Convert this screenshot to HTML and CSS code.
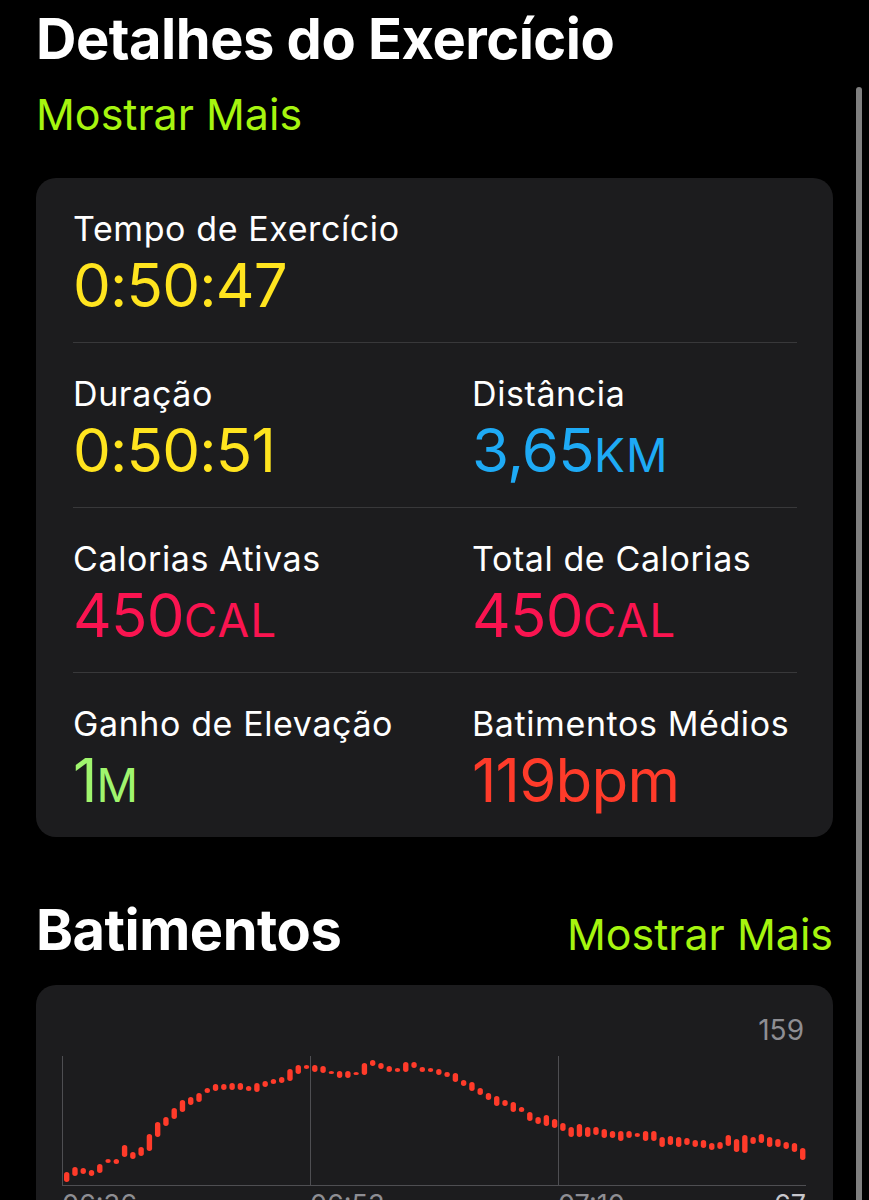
FILE: index.html
```html
<!DOCTYPE html>
<html lang="pt">
<head>
    <meta charset="UTF-8">
    <meta name="viewport" content="width=device-width, initial-scale=1.0">
    <title>Detalhes do Exercício</title>
    <link rel="stylesheet" href="styles.css">
</head>
<body>
    <div class="scrollbar"></div>

    <main class="page">
        <h1 class="title">Detalhes do Exercício</h1>
        <a class="more more-block" href="#">Mostrar Mais</a>

        <section class="card stats">
            <div class="stats-row">
                <div class="stat">
                    <div class="stat-label">Tempo de Exercício</div>
                    <div class="stat-value yellow">0:50:47</div>
                </div>
            </div>
            <div class="stats-row">
                <div class="stat">
                    <div class="stat-label">Duração</div>
                    <div class="stat-value yellow">0:50:51</div>
                </div>
                <div class="stat">
                    <div class="stat-label">Distância</div>
                    <div class="stat-value blue">3,65<span class="unit">KM</span></div>
                </div>
            </div>
            <div class="stats-row">
                <div class="stat">
                    <div class="stat-label">Calorias Ativas</div>
                    <div class="stat-value pink">450<span class="unit">CAL</span></div>
                </div>
                <div class="stat">
                    <div class="stat-label">Total de Calorias</div>
                    <div class="stat-value pink">450<span class="unit">CAL</span></div>
                </div>
            </div>
            <div class="stats-row">
                <div class="stat">
                    <div class="stat-label">Ganho de Elevação</div>
                    <div class="stat-value green">1<span class="unit">M</span></div>
                </div>
                <div class="stat">
                    <div class="stat-label">Batimentos Médios</div>
                    <div class="stat-value red">119bpm</div>
                </div>
            </div>
        </section>

        <div class="section-head">
            <h2 class="title">Batimentos</h2>
            <a class="more" href="#">Mostrar Mais</a>
        </div>

        <section class="card chart-card">
            <div class="chart-max">159</div>
            <svg class="chart" id="hrChart" width="744" height="134" viewBox="0 0 744 134">
                <g class="grid">
                    <rect x="0" y="4" width="1" height="130"></rect>
                    <rect x="248" y="4" width="1" height="130"></rect>
                    <rect x="496" y="4" width="1" height="130"></rect>
                    <rect x="0" y="133" width="744" height="1"></rect>
                </g>
                <g id="hrBars" class="bars"></g>
            </svg>
            <div class="chart-axis">
                <span>06:36</span>
                <span>06:53</span>
                <span class="axis-last"><span>07:10</span><span class="axis-min">67</span></span>
            </div>
        </section>
    </main>

    <script>
        document.addEventListener('DOMContentLoaded', function() {
            // topo e base de cada barra (y dentro do gráfico)
            const bars = [
                [120,130],[115,124],[116,122],[118,124],[112,121],[107,111],[107,112],[93,105],[100,107],[95,104],
                [82,99],[70,85],[65,74],[56,67],[48,60],[45,53],[41,50],[36,41],[32,39],[32,38],
                [31,38],[31,38],[34,39],[31,40],[29,35],[27,32],[25,31],[17,29],[13,22],[13,17],
                [13,20],[14,21],[19,22],[19,26],[19,26],[20,23],[11,23],[8,14],[11,17],[14,20],
                [16,20],[10,20],[10,16],[15,20],[16,20],[17,23],[20,25],[21,30],[28,34],[30,39],
                [36,43],[41,48],[44,54],[48,54],[50,60],[55,60],[60,69],[65,72],[63,74],[67,76],
                [71,79],[75,85],[72,85],[75,85],[75,83],[77,86],[79,86],[79,89],[79,86],[81,85],
                [79,89],[79,89],[85,95],[84,93],[85,95],[86,93],[88,95],[88,96],[91,98],[90,97],
                [83,94],[87,100],[83,101],[85,92],[82,91],[85,95],[87,95],[90,97],[91,100],[96,108]
            ];

            const group = document.getElementById('hrBars');
            const ns = 'http://www.w3.org/2000/svg';
            const step = 8.27;

            bars.forEach(function(bar, i) {
                const rect = document.createElementNS(ns, 'rect');
                rect.setAttribute('x', (2 + i * step).toFixed(2));
                rect.setAttribute('y', bar[0]);
                rect.setAttribute('width', 5.4);
                rect.setAttribute('height', bar[1] - bar[0]);
                rect.setAttribute('rx', 2.7);
                group.appendChild(rect);
            });
        });
    </script>
</body>
</html>
```

FILE: styles.css
```css
:root {
    --bg: #000;
    --card: #1c1c1e;
    --divider: #38383a;
    --muted: #8e8e93;
    --lime: #a6f50f;
    --yellow: #ffe41f;
    --blue: #1eaaf5;
    --pink: #fa1450;
    --green: #a0f56e;
    --red: #ff3b2a;
}

* {
    box-sizing: border-box;
    margin: 0;
    padding: 0;
}

body {
    background: var(--bg);
    color: #fff;
    font-family: Inter, 'Noto Sans', sans-serif;
    position: relative;
}

.scrollbar {
    position: absolute;
    top: 87px;
    left: 856px;
    width: 6px;
    height: 1300px;
    background: #7f7f7f;
    border-radius: 3px;
}

.page {
    padding: 6px 36px 0;
}

.title {
    font-size: 56px;
    font-weight: 700;
    line-height: 66px;
    letter-spacing: -0.5px;
}

.more {
    color: var(--lime);
    text-decoration: none;
    font-size: 43px;
    line-height: 56px;
}

.more-block {
    display: block;
    margin-top: 14px;
}

.card {
    background: var(--card);
    border-radius: 20px;
}

.stats {
    margin-top: 36px;
    padding: 0 36px 0 37px;
}

.stats-row {
    display: grid;
    grid-template-columns: 1fr 1fr;
    column-gap: 74px;
    padding: 32px 0 26px;
}

.stats-row + .stats-row {
    border-top: 1px solid var(--divider);
}

.stat-label {
    font-size: 34px;
    line-height: 38px;
    letter-spacing: 0.6px;
    white-space: nowrap;
}

.stat-value {
    margin-top: 6px;
    font-size: 60px;
    line-height: 62px;
    letter-spacing: -0.8px;
    white-space: nowrap;
}

.unit {
    font-size: 46px;
    line-height: 46px;
    letter-spacing: 1px;
}

.yellow { color: var(--yellow); }
.blue { color: var(--blue); }
.pink { color: var(--pink); }
.green { color: var(--green); }
.red { color: var(--red); }

.section-head {
    display: flex;
    justify-content: space-between;
    align-items: baseline;
    margin-top: 60px;
}

.chart-card {
    margin-top: 22px;
    padding: 28px 27px 40px 26px;
}

.chart-max {
    text-align: right;
    color: var(--muted);
    font-size: 28px;
    line-height: 34px;
    padding-right: 2px;
}

.chart {
    display: block;
    margin-top: 5px;
}

.grid rect {
    fill: #4e4e52;
}

.bars rect {
    fill: var(--red);
}

.chart-axis {
    display: flex;
    margin-top: 3px;
    color: var(--muted);
    font-size: 27px;
    line-height: 32px;
}

.chart-axis > span {
    width: 248px;
}

.axis-last {
    display: flex;
    justify-content: space-between;
}

.axis-min {
    color: #c7c7cc;
}
```
